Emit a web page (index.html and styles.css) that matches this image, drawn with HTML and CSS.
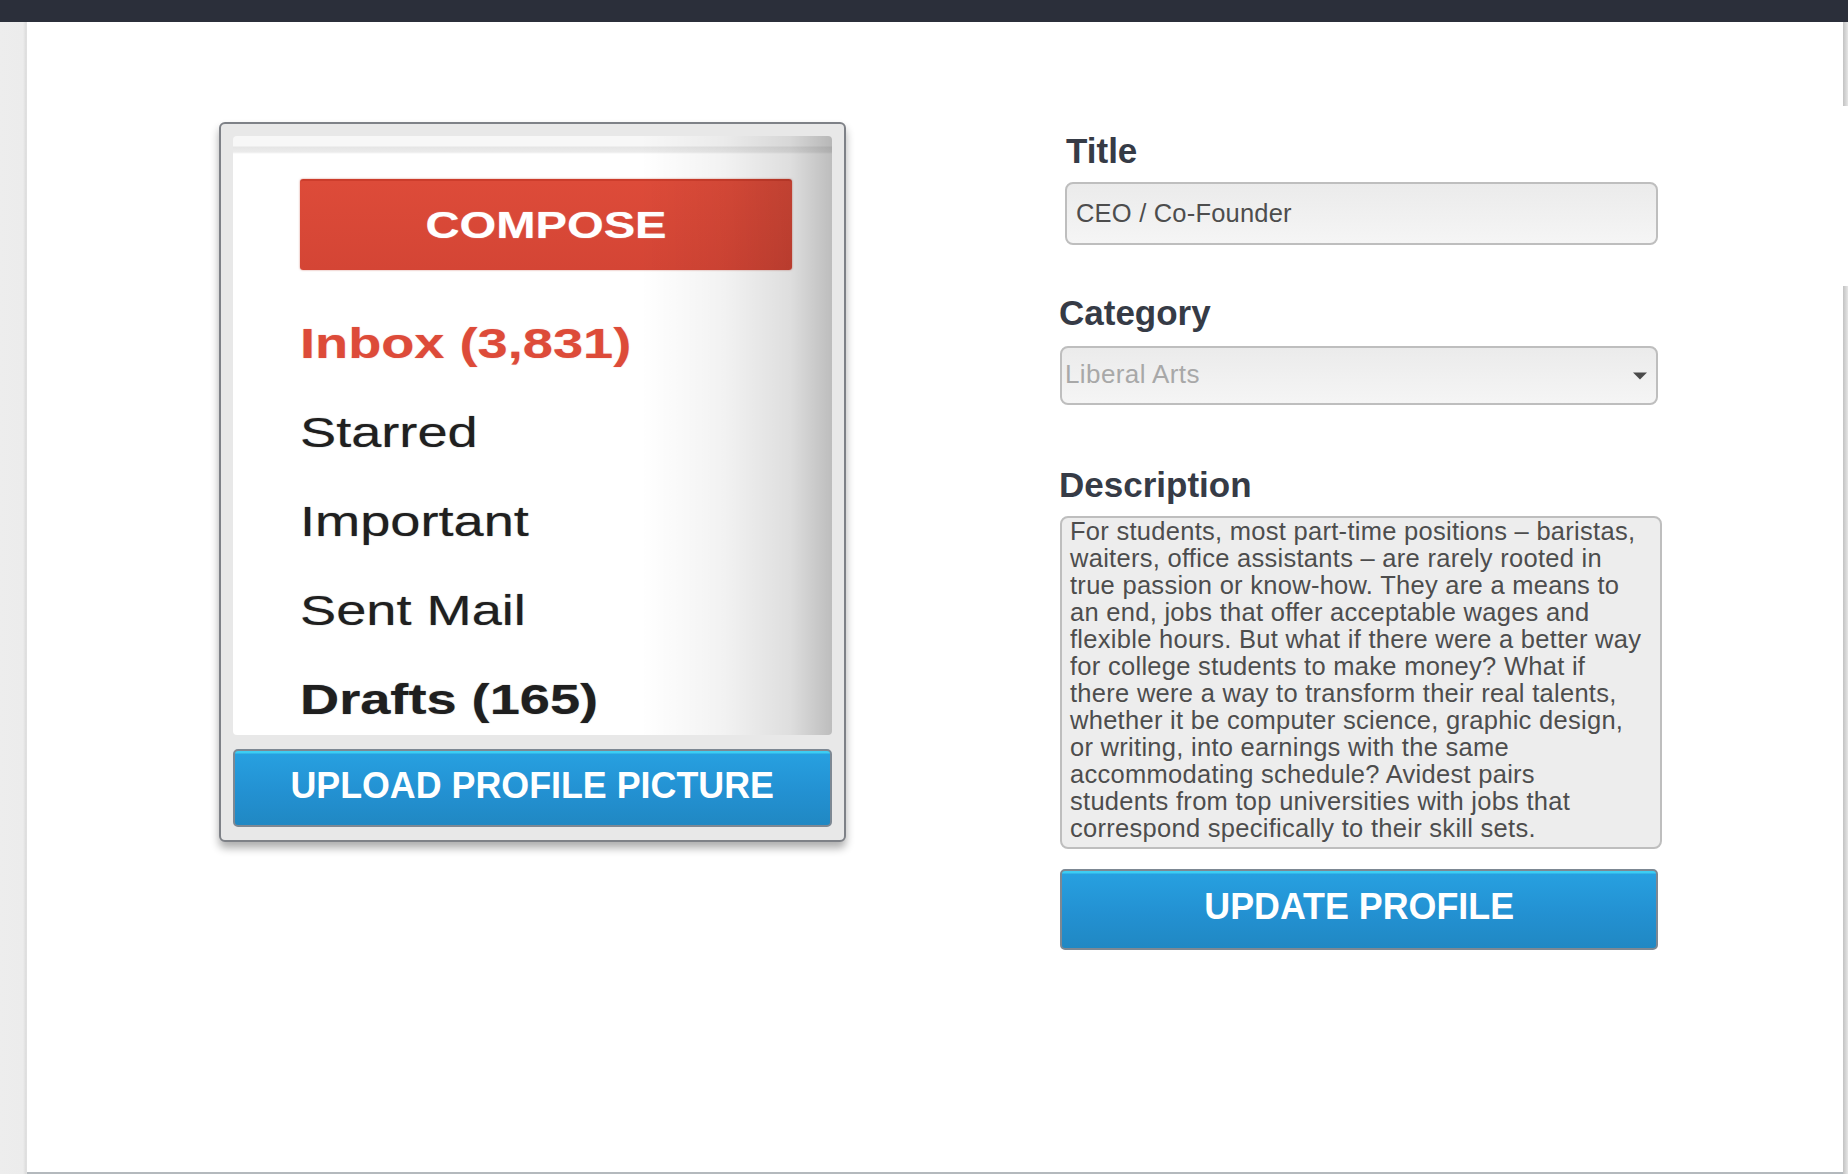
FILE: index.html
```html
<!DOCTYPE html>
<html lang="en">
<head>
<meta charset="utf-8">
<title>Edit Profile</title>
<link rel="stylesheet" href="styles.css">
</head>
<body>
  <div class="topbar"></div>
  <div class="frame">
    <div class="gutter"></div>
    <main class="page">
      <div class="layout">
        <section class="card">
          <div class="mail">
            <div class="compose"><span>COMPOSE</span></div>
            <ul class="folders">
              <li class="folder is-inbox"><span>Inbox (3,831)</span></li>
              <li class="folder"><span>Starred</span></li>
              <li class="folder"><span>Important</span></li>
              <li class="folder"><span>Sent Mail</span></li>
              <li class="folder is-bold"><span>Drafts (165)</span></li>
            </ul>
          </div>
          <button class="btn btn-upload" type="button"><span>UPLOAD PROFILE PICTURE</span></button>
        </section>

        <form class="profile">
          <label class="label label-title">Title</label>
          <div class="field field-title">CEO / Co-Founder</div>

          <label class="label label-category">Category</label>
          <div class="field field-select">
            <span class="placeholder">Liberal Arts</span>
            <svg class="caret" width="14" height="8" viewBox="0 0 14 8"><path d="M0 0.5 H14 L7 7.5 Z" fill="#4a4a4a"/></svg>
          </div>

          <label class="label label-desc">Description</label>
          <div class="field field-desc">For students, most part-time positions – baristas,<br>waiters, office assistants – are rarely rooted in<br>true passion or know-how. They are a means to<br>an end, jobs that offer acceptable wages and<br>flexible hours. But what if there were a better way<br>for college students to make money? What if<br>there were a way to transform their real talents,<br>whether it be computer science, graphic design,<br>or writing, into earnings with the same<br>accommodating schedule? Avidest pairs<br>students from top universities with jobs that<br>correspond specifically to their skill sets.</div>

          <button class="btn btn-update" type="button"><span>UPDATE PROFILE</span></button>
        </form>
      </div>
    </main>
    <div class="edge">
      <span class="edge-a"></span>
      <span class="edge-b"></span>
      <span class="edge-c"></span>
    </div>
  </div>
</body>
</html>
```

FILE: styles.css
```css
* { box-sizing: border-box; }

html, body {
  margin: 0;
  padding: 0;
}

body {
  width: 1848px;
  height: 1174px;
  overflow: hidden;
  background: #ffffff;
  font-family: "Liberation Sans", Arial, sans-serif;
  display: flex;
  flex-direction: column;
}

.topbar {
  height: 22px;
  flex: 0 0 22px;
  background: #2b2f3a;
}

.frame {
  flex: 1 1 auto;
  display: flex;
  min-height: 0;
}

.gutter {
  width: 27px;
  flex: 0 0 27px;
  background: linear-gradient(to right, #ededed 0, #ececec 23px, #dcdcdc 26px, #e4e4e4 27px);
}

.page {
  flex: 1 1 auto;
  background: #ffffff;
  border-bottom: 2px solid #b4b9bd;
  padding: 100px 0 0 192px;
}

.edge {
  width: 5px;
  flex: 0 0 5px;
  display: flex;
  flex-direction: column;
}

.edge-a {
  height: 84px;
  background: linear-gradient(to right, #c2c2c2, #e6e6e6);
}

.edge-b {
  height: 180px;
  background: #ffffff;
}

.edge-c {
  flex: 1 1 auto;
  background: linear-gradient(to right, #c2c2c2, #e6e6e6);
}

.layout {
  display: flex;
  align-items: flex-start;
}

/* ---------- left card ---------- */

.card {
  width: 627px;
  height: 720px;
  padding: 12px 12px 13px;
  background: #e8e8e8;
  border: 2px solid #7e8187;
  border-radius: 6px;
  box-shadow: 0 6px 8px rgba(0, 0, 0, 0.32);
  display: flex;
  flex-direction: column;
  gap: 14px;
}

.mail {
  position: relative;
  height: 599px;
  overflow: hidden;
  border-radius: 4px;
  background: linear-gradient(to bottom, #f7f7f7 0, #f7f7f7 10px, #e5e5e5 11px, #ebebeb 16px, #ffffff 18px);
  padding: 43px 40px 0 67px;
}

.mail::after {
  content: "";
  position: absolute;
  inset: 0;
  pointer-events: none;
  background: linear-gradient(to right, rgba(0, 0, 0, 0) 68%, rgba(0, 0, 0, 0.05) 82%, rgba(0, 0, 0, 0.13) 93%, rgba(0, 0, 0, 0.26) 100%);
}

.compose {
  height: 91px;
  border-radius: 3px;
  background: linear-gradient(to bottom, #dd4b39, #d44535);
  border-top: 2px solid #cc3d2c;
  box-shadow: 0 0 2px rgba(180, 40, 25, 0.6);
  display: flex;
  align-items: center;
  justify-content: center;
}

.compose span {
  display: inline-block;
  color: #ffffff;
  font-size: 36px;
  font-weight: 700;
  transform: scaleX(1.31);
  text-shadow: 0 0 1px rgba(255, 255, 255, 0.6);
}

.folders {
  list-style: none;
  margin: 29px 0 0;
  padding: 0;
}

.folder {
  height: 89px;
  line-height: 89px;
  font-size: 42px;
  color: #1f1f1f;
  white-space: nowrap;
}

.folder span {
  display: inline-block;
  transform: scaleX(1.29);
  transform-origin: left center;
  text-shadow: 0 0 1px rgba(0, 0, 0, 0.5);
}

.folder.is-inbox {
  color: #dd4b39;
  font-weight: 700;
}

.folder.is-inbox span {
  text-shadow: 0 0 1px rgba(221, 75, 57, 0.5);
}

.folder.is-bold {
  font-weight: 700;
}

/* ---------- buttons ---------- */

.btn {
  display: flex;
  align-items: center;
  justify-content: center;
  padding: 0 0 6px;
  margin: 0;
  border: 2px solid #7d8893;
  border-radius: 5px;
  background: linear-gradient(to bottom, #3ccdf3 0, #3ccdf3 2px, #27a0e0 3px, #2391d2 55%, #2088c3 100%);
  color: #ffffff;
  font-family: "Liberation Sans", Arial, sans-serif;
  font-weight: 700;
  font-size: 37.5px;
  white-space: nowrap;
  cursor: pointer;
}

.btn span {
  display: inline-block;
  transform: scaleX(0.955);
}

.btn-upload {
  height: 78px;
  width: 100%;
}

.btn-update {
  margin-top: 20px;
  width: 598px;
  height: 81px;
}

/* ---------- right form ---------- */

.profile {
  margin: 9px 0 0 214px;
  width: 602px;
  display: flex;
  flex-direction: column;
  align-items: flex-start;
}

.label {
  display: block;
  font-size: 35px;
  line-height: 40px;
  font-weight: 700;
  color: #363b46;
}

.label-title {
  margin-left: 6px;
}

.label-category {
  margin-top: 48px;
  margin-left: -1px;
}

.label-desc {
  margin-top: 60px;
  margin-left: -1px;
}

.field {
  border: 2px solid #bebebe;
  border-radius: 8px;
  color: #4d4d4d;
  font-size: 25.5px;
}

.field-title {
  margin: 11px 0 0 5px;
  width: 593px;
  height: 63px;
  padding: 0 0 0 9px;
  display: flex;
  align-items: center;
  letter-spacing: 0.2px;
  background: linear-gradient(to bottom, #ebebeb, #f5f5f5);
}

.field-select {
  margin-top: 13px;
  width: 598px;
  height: 59px;
  padding: 0 9px 2px 3px;
  display: flex;
  align-items: center;
  justify-content: space-between;
  background: linear-gradient(to bottom, #ebebeb, #f5f5f5);
}

.placeholder {
  color: #a8a8a8;
  font-size: 26px;
  letter-spacing: 0.4px;
}

.caret {
  display: block;
  margin-top: 3px;
}

.field-desc {
  margin-top: 11px;
  width: 602px;
  height: 333px;
  padding: 0 6px 0 8px;
  background: #ededed;
  line-height: 27px;
  letter-spacing: 0.28px;
  white-space: nowrap;
  overflow: hidden;
}
```
